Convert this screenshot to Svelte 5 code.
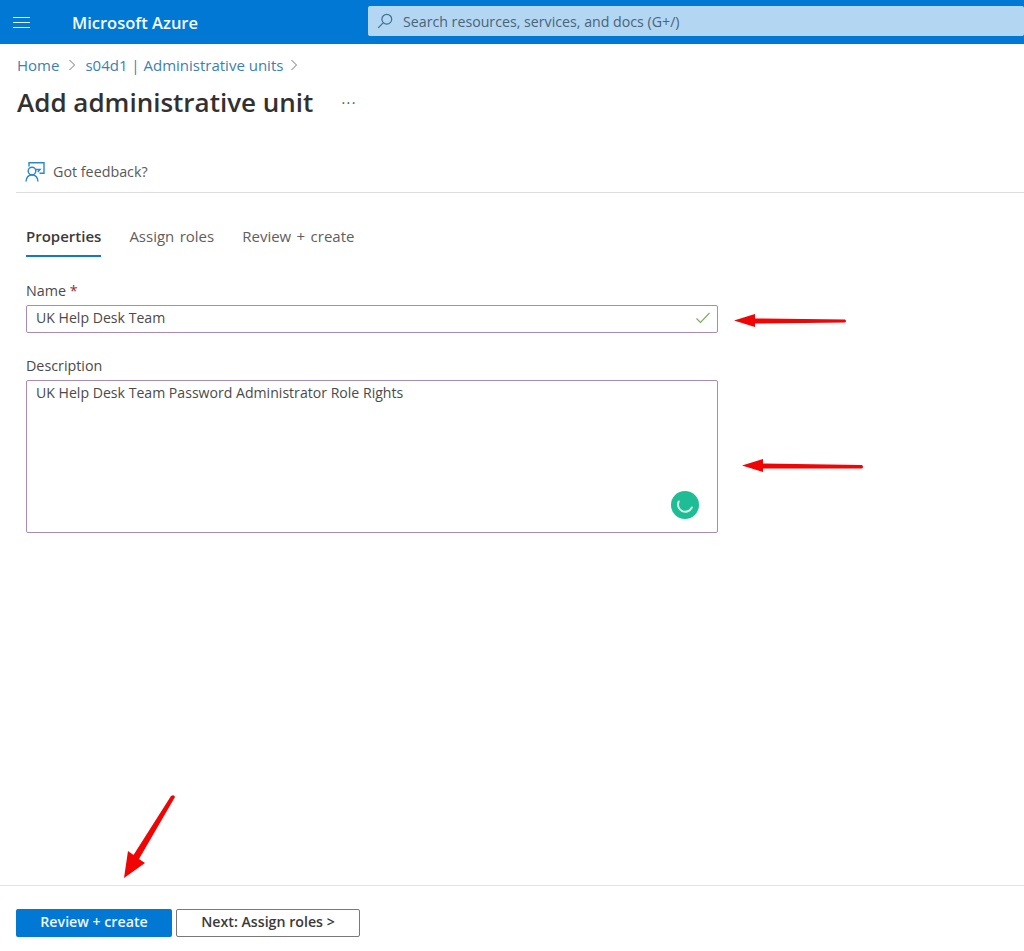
<script>
    let name = 'UK Help Desk Team';
    let description = 'UK Help Desk Team Password Administrator Role Rights';
    const tabs = ['Properties', 'Assign roles', 'Review + create'];
</script>

<div class="page">
    <header>
        <button class="menu" aria-label="Menu">
            <span></span><span></span><span></span>
        </button>
        <div class="brand">Microsoft Azure</div>
        <div class="search">
            <svg width="16" height="16" viewBox="0 0 16 16" fill="none" stroke="#3f6f96" stroke-width="1.2">
                <circle cx="9.8" cy="6.2" r="4.9" />
                <path d="M6.2 9.8 1.2 14.8" />
            </svg>
            <span>Search resources, services, and docs (G+/)</span>
        </div>
    </header>

    <nav class="crumbs">
        <a href="#home">Home</a>
        <svg class="chev" width="8" height="12" viewBox="0 0 8 12"><path d="M1.5 1 6.5 6 1.5 11" /></svg>
        <a href="#units">s04d1 | Administrative units</a>
        <svg class="chev last" width="8" height="12" viewBox="0 0 8 12"><path d="M1.5 1 6.5 6 1.5 11" /></svg>
    </nav>

    <div class="title-row">
        <h1>Add administrative unit</h1>
        <span class="dots">···</span>
    </div>

    <div class="toolbar">
        <svg width="20" height="20" viewBox="0 0 20 20" fill="none" stroke="#2b88c8" stroke-width="1.4">
            <path d="M4 4.500V.8h15v10.400h-4.500" />
            <circle cx="7" cy="9" r="3.800" />
            <path d="M1 19.500c.3-3.800 2.600-6.500 6-6.500s5.700 2.700 6 6.500" />
            <path d="M10.500 7.500h4.500l-2.200 2.500" />
        </svg>
        <span>Got feedback?</span>
    </div>

    <main>
        <div class="tabs">
            {#each tabs as tab, i}
                <div class="tab" class:active={i === 0}>{tab}</div>
            {/each}
        </div>

        <label class="field-label name-label" for="name">Name <span class="req">*</span></label>
        <div class="input-wrap">
            <input id="name" bind:value={name} />
            <svg class="check" width="16" height="12" viewBox="0 0 16 12" fill="none" stroke="#7aa95c" stroke-width="1.1">
                <path d="M1.500 6.500 5.500 10.500 14.500 1" />
            </svg>
        </div>

        <label class="field-label desc-label" for="description">Description</label>
        <div class="input-wrap">
            <textarea id="description" bind:value={description}></textarea>
            <div class="grammarly">
                <svg width="20" height="20" viewBox="0 0 20 20" fill="none" stroke="#d2f2e8" stroke-width="2" stroke-linecap="round">
                    <path d="M3.700 6.500A7.200 7.200 0 1 0 16.800 12.500" />
                </svg>
            </div>
        </div>
    </main>

    <footer>
        <button class="primary">Review + create</button>
        <button class="secondary">Next: Assign roles &gt;</button>
    </footer>

    <!-- red annotations drawn over the screenshot -->
    <svg class="arrows" width="1024" height="951" viewBox="0 0 1024 951" fill="#f00404" stroke="none">
        <path d="M734 320.500 755 314V318.500L845 319.500Q847 321 845 322.500L755 323.500V327Z" />
        <path d="M742 465.500 763 459V463.500L862 465Q864 467 862 468.500L763 468.500V472Z" />
        <path d="M124 878 128 851 133.500 855 171 796Q174 794 175 797L139 859 145 863Z" />
    </svg>
</div>

<style>
    :global(body) {
        background: #fff;
    }

    .page {
        position: relative;
        display: flex;
        flex-direction: column;
        width: 1024px;
        height: 951px;
        overflow: hidden;
        font-family: "Open Sans", "Liberation Sans", sans-serif;
        color: #3b3a39;
        background: #fff;
    }

    header {
        display: flex;
        align-items: center;
        height: 44px;
        flex-shrink: 0;
        background: #0078d4;
    }

    .menu {
        display: flex;
        flex-direction: column;
        gap: 4px;
        width: 17px;
        margin-left: 13px;
        padding: 0;
        border: 0;
        background: none;
    }

    .menu span {
        display: block;
        height: 1px;
        background: #e3f1fb;
    }

    .brand {
        margin-left: 42px;
        width: 296px;
        font-size: 16.500px;
        font-weight: 600;
        color: #f4fafe;
    }

    .search {
        display: flex;
        align-items: center;
        gap: 10px;
        width: 656px;
        height: 30px;
        margin-top: -2px;
        padding-left: 9px;
        box-sizing: border-box;
        background: #b3d6f2;
        border-radius: 2px;
        font-size: 14.200px;
        color: #4a6478;
    }

    .crumbs {
        display: flex;
        align-items: center;
        gap: 9px;
        margin: 10px 0 0 17px;
        height: 21px;
        font-size: 15px;
    }

    .crumbs a {
        color: #3c7fb1;
        text-decoration: none;
    }

    .chev path {
        fill: none;
        stroke: #777;
        stroke-width: 1;
    }

    .chev.last {
        margin-left: -2px;
    }

    .title-row {
        display: flex;
        align-items: center;
        margin: 10px 0 0 17px;
        height: 34px;
    }

    h1 {
        margin: 0;
        font-size: 26px;
        font-weight: 600;
        color: #323130;
    }

    .dots {
        margin-left: 28px;
        font-size: 14px;
        letter-spacing: 1.500px;
        color: #555;
    }

    .toolbar {
        display: flex;
        align-items: center;
        gap: 8px;
        height: 41px;
        margin: 32px 0 0 16px;
        padding-left: 9px;
        border-bottom: 1px solid #ddd;
        font-size: 14.300px;
        color: #5a5958;
    }

    main {
        flex: 1;
        padding: 0 0 0 26px;
    }

    .tabs {
        display: flex;
        gap: 28px;
        margin-top: 33px;
    }

    .tab {
        height: 31px;
        box-sizing: border-box;
        font-size: 15px;
        line-height: 21px;
        word-spacing: 1.500px;
        color: #5f5e5d;
    }

    .tab.active {
        font-weight: 600;
        color: #3b3a39;
        border-bottom: 2px solid #0f7bc4;
    }

    .field-label {
        display: block;
        font-size: 14.300px;
        line-height: 20px;
        color: #4b4a49;
    }

    .name-label {
        margin-top: 24px;
        margin-bottom: 4px;
    }

    .desc-label {
        margin-top: 23px;
        margin-bottom: 4px;
    }

    .req {
        color: #a4262c;
    }

    .input-wrap {
        position: relative;
        width: 692px;
    }

    input,
    textarea {
        display: block;
        width: 100%;
        box-sizing: border-box;
        padding: 0 9px;
        border: 1px solid #a98bb5;
        border-radius: 2px;
        outline: none;
        resize: none;
        font: inherit;
        font-size: 14.100px;
        color: #4b4a49;
        background: #fff;
    }

    input {
        height: 28px;
        padding-bottom: 3px;
    }

    textarea {
        height: 153px;
        padding-top: 2px;
        line-height: 20px;
    }

    .check {
        position: absolute;
        top: 7px;
        right: 7px;
    }

    .grammarly {
        position: absolute;
        right: 19px;
        bottom: 14px;
        display: flex;
        align-items: center;
        justify-content: center;
        width: 28px;
        height: 28px;
        border-radius: 50%;
        background: #1fbd96;
    }

    footer {
        display: flex;
        gap: 4px;
        height: 66px;
        box-sizing: border-box;
        padding: 23px 0 0 16px;
        border-top: 1px solid #e4e4e4;
    }

    footer button {
        height: 28px;
        padding: 0 0 3px;
        border-radius: 2px;
        font: inherit;
        font-size: 14.200px;
        font-weight: 600;
    }

    .primary {
        width: 156px;
        border: 0;
        color: #eef7fd;
        background: #0078d4;
    }

    .secondary {
        width: 184px;
        border: 1px solid #7a7978;
        color: #3b3a39;
        background: #fff;
    }

    .arrows {
        position: absolute;
        top: 0;
        left: 0;
        pointer-events: none;
    }
</style>
